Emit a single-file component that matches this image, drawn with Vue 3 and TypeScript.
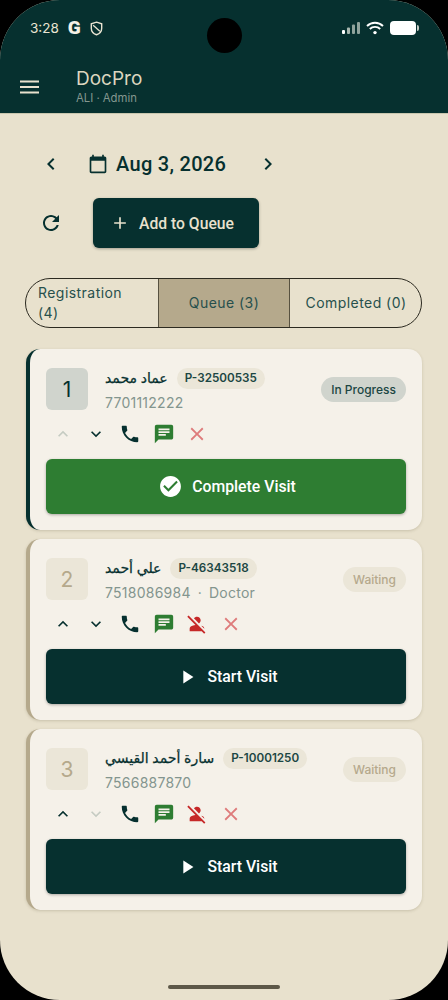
<script setup lang="ts">
interface Visit {
  num: number;
  name: string;
  code: string;
  phone: string;
  extra?: string;
  status: string;
  active: boolean;
  upOff?: boolean;
  downOff?: boolean;
}

const icons = {
  left: 'M15.41 7.41 14 6l-6 6 6 6 1.41-1.41L10.83 12z',
  right: 'M10 6 8.59 7.41 13.17 12l-4.58 4.59L10 18l6-6z',
  calendar: 'M20 3h-1V1h-2v2H7V1H5v2H4c-1.1 0-2 .9-2 2v16c0 1.1.9 2 2 2h16c1.1 0 2-.9 2-2V5c0-1.1-.9-2-2-2zm0 18H4V8h16v13z',
  refresh: 'M17.65 6.35C16.2 4.9 14.21 4 12 4c-4.42 0-7.99 3.58-7.99 8s3.57 8 7.99 8c3.73 0 6.84-2.55 7.73-6h-2.08c-.82 2.33-3.04 4-5.65 4-3.31 0-6-2.69-6-6s2.69-6 6-6c1.66 0 3.14.69 4.22 1.78L13 11h7V4l-2.35 2.35z',
  add: 'M19 13h-6v6h-2v-6H5v-2h6V5h2v6h6v2z',
  up: 'M7.41 15.41 12 10.83l4.59 4.58L18 14l-6-6-6 6z',
  down: 'M7.41 8.59 12 13.17l4.59-4.58L18 10l-6 6-6-6z',
  phone: 'M6.62 10.79c1.44 2.83 3.76 5.14 6.59 6.59l2.2-2.2c.27-.27.67-.36 1.02-.24 1.12.37 2.33.57 3.57.57.55 0 1 .45 1 1V20c0 .55-.45 1-1 1-9.39 0-17-7.61-17-17 0-.55.45-1 1-1h3.5c.55 0 1 .45 1 1 0 1.25.2 2.45.57 3.57.11.35.03.74-.25 1.02l-2.2 2.2z',
  sms: 'M20 2H4c-1.1 0-1.99.9-1.99 2L2 22l4-4h14c1.1 0 2-.9 2-2V4c0-1.1-.9-2-2-2zM6 9h12v2H6V9zm8 5H6v-2h8v2zm4-6H6V6h12v2z',
  close: 'M19 6.41 17.59 5 12 10.59 6.41 5 5 6.41 10.59 12 5 17.59 6.41 19 12 13.41 17.59 19 19 17.59 13.41 12z',
  personOff: 'M8.65 5.82C9.36 4.72 10.6 4 12 4c2.21 0 4 1.79 4 4 0 1.4-.72 2.64-1.82 3.35L8.65 5.82zM20 17.17c-.02-1.1-.63-2.11-1.61-2.62-.54-.28-1.13-.54-1.77-.76L20 17.17zm1.19 4.02L2.81 2.81 1.39 4.22l8.89 8.89c-1.81.23-3.39.79-4.67 1.45C4.61 15.07 4 16.1 4 17.22V20h13.17l2.61 2.61 1.41-1.42z',
  check: 'M12 2C6.48 2 2 6.48 2 12s4.48 10 10 10 10-4.48 10-10S17.52 2 12 2zm-2 15-5-5 1.41-1.41L10 14.17l7.59-7.59L19 8l-9 9z',
  play: 'M8 5v14l11-7z',
}

const visits: Visit[] = [
  { num: 1, name: 'عماد محمد', code: 'P-32500535', phone: '7701112222', status: 'In Progress', active: true, upOff: true },
  { num: 2, name: 'علي أحمد', code: 'P-46343518', phone: '7518086984', extra: 'Doctor', status: 'Waiting', active: false },
  { num: 3, name: 'سارة أحمد القيسي', code: 'P-10001250', phone: '7566887870', status: 'Waiting', active: false, downOff: true },
]
</script>

<template>
  <div class="phone">
    <div class="camera"></div>

    <header class="top">
      <div class="status">
        <div class="status-left">
          <span class="time">3:28</span>
          <span class="g">G</span>
          <svg class="shield" viewBox="0 0 14 16" width="13" height="15">
            <path d="M7 1.2 12.6 3v4.6c0 3.2-2.3 5.9-5.6 7.1-3.3-1.2-5.6-3.9-5.6-7.1V3z" fill="none" stroke="#e9e4d2" stroke-width="1.5" />
            <path d="M3.4 4.4 10.6 11" fill="none" stroke="#e9e4d2" stroke-width="1.4" />
          </svg>
        </div>
        <div class="status-right">
          <svg viewBox="0 0 20 14" width="20" height="14">
            <rect x="2" y="9" width="3" height="4" rx="1" fill="#fff" />
            <rect x="7" y="6.5" width="3" height="6.5" rx="1" fill="#a9b8b0" />
            <rect x="12" y="3.5" width="3" height="9.5" rx="1" fill="#8fa39c" />
            <rect x="17" y="1" width="3" height="12" rx="1" fill="#8fa39c" />
          </svg>
          <svg viewBox="0 0 18 14" width="18" height="14">
            <path d="M1 5a11.5 11.5 0 0 1 16 0M3.8 8a7.4 7.4 0 0 1 10.4 0" fill="none" stroke="#fff" stroke-width="1.9" />
            <circle cx="9" cy="11.6" r="1.7" fill="#fff" />
          </svg>
          <span class="battery"></span>
        </div>
      </div>
      <div class="appbar">
        <svg class="menu" viewBox="0 0 20 14" width="20" height="14">
          <rect x="0" y="0.5" width="19" height="2" fill="#e8e1cd" />
          <rect x="0" y="6" width="19" height="2" fill="#e8e1cd" />
          <rect x="0" y="11.5" width="19" height="2" fill="#e8e1cd" />
        </svg>
        <div>
          <div class="app-title">DocPro</div>
          <div class="app-sub">ALI · Admin</div>
        </div>
      </div>
    </header>

    <main class="content">
      <div class="date-row">
        <svg class="ic-dark" viewBox="0 0 24 24" width="24" height="24"><path :d="icons.left" /></svg>
        <svg class="ic-dark cal" viewBox="0 0 24 24" width="20" height="20"><path :d="icons.calendar" /></svg>
        <span class="date">Aug 3, 2026</span>
        <svg class="ic-dark next" viewBox="0 0 24 24" width="24" height="24"><path :d="icons.right" /></svg>
      </div>

      <div class="add-row">
        <svg class="ic-dark" viewBox="0 0 24 24" width="24" height="24"><path :d="icons.refresh" /></svg>
        <button class="add-btn">
          <svg viewBox="0 0 24 24" width="20" height="20" fill="#e8e1cd"><path :d="icons.add" /></svg>
          <span>Add to Queue</span>
        </button>
      </div>

      <div class="tabs">
        <div class="tab first">Registration (4)</div>
        <div class="tab on">Queue (3)</div>
        <div class="tab last">Completed (0)</div>
      </div>

      <section v-for="v in visits" :key="v.num" class="card" :class="{ current: v.active }">
        <div class="card-top">
          <div class="num">{{ v.num }}</div>
          <div class="who">
            <div class="name-line">
              <span class="name">{{ v.name }}</span>
              <span class="code">{{ v.code }}</span>
            </div>
            <div class="phone-no">
              {{ v.phone }}<template v-if="v.extra"><span class="dot">·</span>{{ v.extra }}</template>
            </div>
          </div>
          <span class="badge">{{ v.status }}</span>
        </div>

        <div class="actions">
          <svg class="ic-dark" :class="{ off: v.upOff }" viewBox="0 0 24 24" width="20" height="20"><path :d="icons.up" /></svg>
          <svg class="ic-dark" :class="{ off: v.downOff }" viewBox="0 0 24 24" width="20" height="20"><path :d="icons.down" /></svg>
          <svg class="ic-dark" viewBox="0 0 24 24" width="22" height="22"><path :d="icons.phone" /></svg>
          <svg class="ic-green" viewBox="0 0 24 24" width="22" height="22"><path :d="icons.sms" /></svg>
          <svg v-if="!v.active" class="ic-red" viewBox="0 0 24 24" width="22" height="22"><path :d="icons.personOff" /></svg>
          <svg class="ic-cancel" viewBox="0 0 24 24" width="22" height="22"><path :d="icons.close" /></svg>
        </div>

        <button class="main-btn" :class="{ green: v.active }">
          <svg viewBox="0 0 24 24" :width="v.active ? 25 : 22" :height="v.active ? 25 : 22" fill="#fff">
            <path :d="v.active ? icons.check : icons.play" />
          </svg>
          <span>{{ v.active ? 'Complete Visit' : 'Start Visit' }}</span>
        </button>
      </section>
    </main>

    <div class="home-bar"></div>
  </div>
</template>

<style>
html, body {
  margin: 0;
  background: #000;
}
</style>

<style scoped>
.phone {
  position: relative;
  width: 448px;
  height: 1000px;
  overflow: hidden;
  border-radius: 60px;
  background: #e8e1cd;
  font-family: Inter, "DejaVu Sans", sans-serif;
  color: #06302f;
}

.camera {
  position: absolute;
  top: 18px;
  left: 207px;
  width: 35px;
  height: 35px;
  border-radius: 50%;
  background: #000;
}

.top {
  height: 113px;
  background: #06302f;
  border-bottom: 1px solid #c8c6ae;
  box-sizing: content-box;
}

.status {
  display: flex;
  justify-content: space-between;
  align-items: center;
  height: 28px;
  padding: 14px 30px 0;
}

.status-left {
  display: flex;
  align-items: center;
  gap: 9px;
}

.time {
  font-size: 13.5px;
  color: #e9e4d2;
}

.g {
  font-family: Roboto, sans-serif;
  font-size: 19px;
  line-height: 20px;
  font-weight: 900;
  color: #f4f1e6;
}

.status-right {
  display: flex;
  align-items: center;
  gap: 6px;
}

.battery {
  position: relative;
  width: 26px;
  height: 14px;
  border-radius: 4px;
  background: #fff;
  margin-right: 2px;
}

.battery::after {
  content: "";
  position: absolute;
  top: 4px;
  right: -3px;
  width: 2px;
  height: 6px;
  border-radius: 0 2px 2px 0;
  background: #c6ccc5;
}

.appbar {
  display: flex;
  align-items: center;
  padding: 25px 0 0 20px;
  gap: 36px;
}

.app-title {
  font-size: 19px;
  line-height: 24px;
  color: #dcd6bf;
}

.app-sub {
  font-size: 11.3px;
  line-height: 15px;
  color: #84978f;
}

.content {
  padding: 0 26px 0 26px;
}

.date-row {
  display: flex;
  align-items: center;
  height: 38px;
  margin-top: 31px;
  padding-left: 13px;
}

.cal {
  margin-left: 25px;
}

.date {
  margin-left: 8px;
  font-family: Roboto, sans-serif;
  font-size: 20px;
  font-weight: 500;
  letter-spacing: 0.3px;
}

.next {
  margin-left: 30px;
}

.add-row {
  display: flex;
  align-items: center;
  margin-top: 15px;
  padding-left: 13px;
}

.add-btn {
  display: flex;
  align-items: center;
  justify-content: center;
  gap: 9px;
  width: 166px;
  height: 50px;
  margin-left: 30px;
  padding: 0 8px 0 0;
  border: none;
  border-radius: 6px;
  background: #06302f;
  color: #e8e1cd;
  font-family: Roboto, sans-serif;
  font-size: 15.7px;
  font-weight: 500;
  box-shadow: 0 1px 3px rgba(0, 0, 0, 0.3);
}

.ic-dark {
  fill: #06302f;
}

.ic-dark.off {
  fill: #c5cbc2;
}

.ic-green {
  fill: #2e7d32;
}

.ic-red {
  fill: #c62828;
}

.ic-cancel {
  fill: #de7b7b;
}

.tabs {
  display: grid;
  grid-template-columns: 132px 132px 1fr;
  height: 50px;
  margin: 30px 0 21px -1px;
  border: 1px solid #2c2a20;
  border-radius: 25px;
  overflow: hidden;
  box-sizing: border-box;
}

.tab {
  display: flex;
  align-items: center;
  justify-content: center;
  font-size: 14px;
  line-height: 20px;
  letter-spacing: 0.45px;
  color: #27504c;
}

.tab.first {
  justify-content: flex-start;
  padding: 0 20px 0 12px;
}

.tab.last {
  padding-left: 1px;
}

.tab.on {
  background: #b5a98c;
  border-left: 1.5px solid #575140;
  border-right: 1.5px solid #575140;
}

.card {
  position: relative;
  height: 181px;
  box-sizing: border-box;
  margin-bottom: 9px;
  padding: 19px 16px 0;
  border-left: 4px solid #b5a98c;
  border-radius: 14px;
  background: #f5f1e9;
  box-shadow: 0 1px 3px rgba(90, 80, 50, 0.22);
}

.card.current {
  border-left-color: #06302f;
}

.card-top {
  display: flex;
  align-items: center;
  height: 42px;
}

.num {
  display: flex;
  align-items: center;
  justify-content: center;
  flex: none;
  width: 42px;
  height: 42px;
  border-radius: 6px;
  background: #ebe6d8;
  color: #b5a98c;
  font-size: 21px;
}

.current .num {
  background: #d0d4cd;
  color: #06302f;
}

.who {
  flex: 1;
  min-width: 0;
  margin-left: 17px;
  padding-top: 1px;
}

.name-line {
  display: flex;
  align-items: center;
  gap: 9px;
}

.name {
  font-size: 14px;
  line-height: 20px;
  font-weight: 500;
  -webkit-text-stroke: 0.25px #06302f;
  color: #06302f;
}

.code {
  padding: 0 8px;
  height: 21px;
  line-height: 21px;
  border-radius: 11px;
  background: #ebe6d8;
  font-size: 11.7px;
  font-weight: 600;
  color: #1c4643;
}

.phone-no {
  margin-top: 5px;
  font-size: 14px;
  line-height: 18px;
  letter-spacing: 0.25px;
  color: #83958e;
}

.dot {
  margin: 0 7px;
}

.badge {
  padding: 0 10px;
  height: 25px;
  line-height: 25px;
  border-radius: 13px;
  background: #ebe6d8;
  color: #b5a98c;
  font-size: 12px;
  font-weight: 500;
}

.current .badge {
  background: #d0d4cd;
  color: #1c4643;
}

.actions {
  display: grid;
  grid-auto-flow: column;
  grid-auto-columns: 33.6px;
  justify-content: start;
  justify-items: center;
  align-items: center;
  height: 24px;
  margin-top: 12px;
}

.main-btn {
  display: flex;
  align-items: center;
  justify-content: center;
  gap: 9px;
  width: 100%;
  height: 55px;
  margin-top: 13px;
  padding: 0 0 0 2px;
  border: none;
  border-radius: 6px;
  background: #06302f;
  color: #fff;
  font-family: Roboto, sans-serif;
  font-size: 15.8px;
  font-weight: 500;
  box-shadow: 0 1px 3px rgba(0, 0, 0, 0.3);
}

.main-btn.green {
  background: #2e7d32;
}

.home-bar {
  position: absolute;
  left: 168px;
  bottom: 11px;
  width: 112px;
  height: 4px;
  border-radius: 2px;
  background: #5d5848;
}
</style>
